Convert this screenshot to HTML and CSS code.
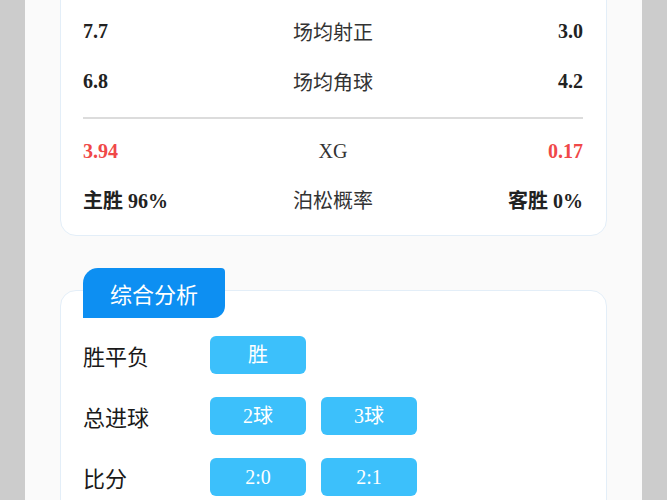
FILE: index.html
```html
<!DOCTYPE html>
<html lang="zh">
<head>
  <meta charset="UTF-8">
  <title>比赛分析</title>
  <meta name="viewport" content="width=device-width, initial-scale=1.0">
  <link rel="stylesheet" href="styles.css">
</head>
<body>
  <div class="page">

    <div class="card stats-card">
      <div class="stat-row">
        <span class="val">7.7</span>
        <span class="name">场均射正</span>
        <span class="val">3.0</span>
      </div>
      <div class="stat-row">
        <span class="val">6.8</span>
        <span class="name">场均角球</span>
        <span class="val">4.2</span>
      </div>

      <div class="divider"></div>

      <div class="stat-row short">
        <span class="val red">3.94</span>
        <span class="name">XG</span>
        <span class="val red">0.17</span>
      </div>
      <div class="stat-row short">
        <span class="val">主胜 96%</span>
        <span class="name">泊松概率</span>
        <span class="val">客胜 0%</span>
      </div>
    </div>

    <div class="card analysis-card">
      <div class="tab">综合分析</div>

      <div class="pick-list">
        <div class="pick-row">
          <span class="pick-label">胜平负</span>
          <span class="pick">胜</span>
        </div>
        <div class="pick-row">
          <span class="pick-label">总进球</span>
          <span class="pick">2球</span>
          <span class="pick">3球</span>
        </div>
        <div class="pick-row">
          <span class="pick-label">比分</span>
          <span class="pick">2:0</span>
          <span class="pick">2:1</span>
        </div>
      </div>
    </div>

  </div>
</body>
</html>
```

FILE: styles.css
```css
html, body {
  margin: 0;
  padding: 0;
  background-color: #cccccc;
  font-family: "Liberation Serif", "Noto Sans CJK SC", serif;
  color: #222;
}

/* 가운데 흰 페이지 영역 */
.page {
  width: 617px;
  margin: 0 auto;
  min-height: 500px;
  background-color: #fafafa;
  padding: 0 35px;
  box-sizing: border-box;
  overflow: hidden;
}

.card {
  background: #fff;
  border: 1px solid #e3eef8;
  border-radius: 16px;
  padding: 0 23px 0 22px;
}

.stats-card {
  margin-top: -20px;
  padding-top: 25px;
  padding-bottom: 12px;
}

.stat-row {
  display: grid;
  grid-template-columns: 1fr auto 1fr;
  align-items: center;
  height: 50px;
}

.stat-row.short {
  height: 48px;
}

.stat-row .val {
  font-size: 20px;
  font-weight: bold;
  color: #222;
}

.stat-row .val:last-child {
  text-align: right;
}

.stat-row .val.red {
  color: #f04848;
}

.stat-row .name {
  font-size: 20px;
  color: #333;
  text-align: center;
}

.divider {
  height: 2px;
  background: #dcdcdc;
  margin: 11px 0 8px;
}

.analysis-card {
  margin-top: 54px;
  padding-bottom: 20px;
}

.tab {
  margin-top: -23px;
  width: 142px;
  height: 50px;
  line-height: 50px;
  text-align: center;
  background: #0d8ff2;
  color: #fff;
  font-family: "Noto Sans CJK SC", sans-serif;
  font-size: 22px;
  border-radius: 15px 4px 12px 0;
}

.pick-list {
  display: flex;
  flex-direction: column;
  gap: 23px;
  padding-top: 18px;
}

.pick-row {
  display: flex;
  align-items: center;
  gap: 15px;
  height: 38px;
}

.pick-label {
  width: 112px;
  line-height: 1;
  font-family: "Noto Sans CJK SC", sans-serif;
  font-size: 22px;
  color: #1a1a1a;
}

.pick {
  width: 96px;
  height: 38px;
  line-height: 38px;
  text-align: center;
  background: #3cc0fb;
  color: #fff;
  font-size: 20px;
  border-radius: 6px;
}
```
